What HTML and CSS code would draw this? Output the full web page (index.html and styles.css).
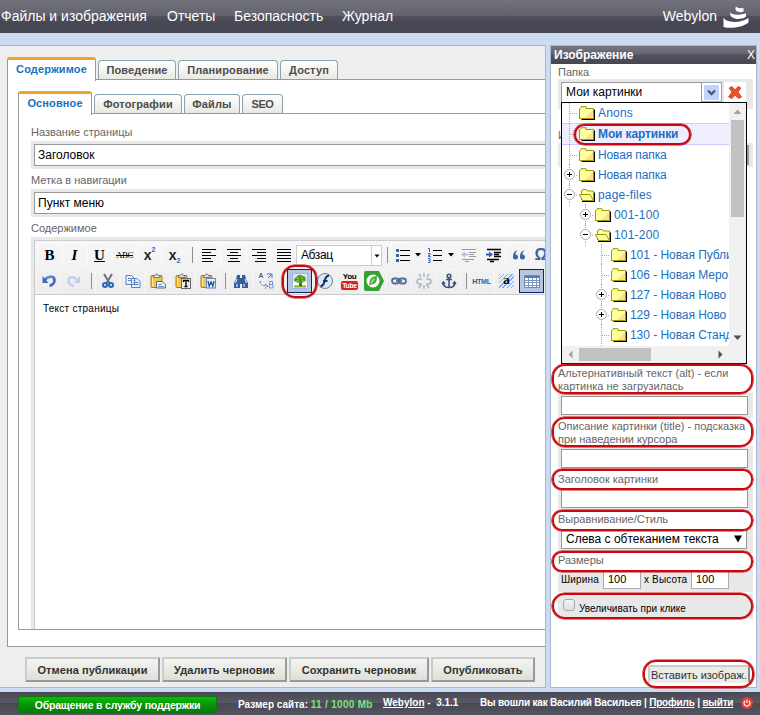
FILE: index.html
```html
<!DOCTYPE html>
<html lang="ru">
<head>
<meta charset="utf-8">
<title>Webylon</title>
<link rel="stylesheet" href="styles.css">
</head>
<body>
<svg class="defs" width="0" height="0">
  <symbol id="folder" viewBox="0 0 16 14"><path d="M2.500 13.500h13v-10" fill="none" stroke="#000" stroke-width="1.500"/><path d="M.5 12.500V3l1.500-1.500V.7h5V2.500h7.500v10z" fill="#ffffa0" stroke="#9c9a00"/><path d="M6 12l8-8v8z" fill="#f5cf7a" opacity=".6"/></symbol>
  <symbol id="open" viewBox="0 0 16 14"><path d="M3 13.500h12.500v-9" fill="none" stroke="#000" stroke-width="1.500"/><path d="M2.500 11V3l1-1.500h4l1 1.500h6v9h-11z" fill="#ffffa0" stroke="#9c9a00"/><path d="M.5 6.500h10.500l3.500 6h-11z" fill="#ffffa0" stroke="#9c9a00"/></symbol>
  <symbol id="plus" viewBox="0 0 11 11"><circle cx="5.500" cy="5.500" r="5" fill="#fff" stroke="#aaa"/><path d="M3 5.500h5M5.500 3v5" stroke="#000"/></symbol>
  <symbol id="minus" viewBox="0 0 11 11"><circle cx="5.500" cy="5.500" r="5" fill="#fff" stroke="#aaa"/><path d="M3 5.500h5" stroke="#000"/></symbol>
  <symbol id="clip" viewBox="0 0 16 16"><rect x="1" y="2.500" width="11" height="12" rx="1" fill="#f1c84b" stroke="#a5781c"/><path d="M3.500 4.500V2.500H5l1-1.500h1.500l1 1.500H10v2z" fill="#ddd" stroke="#666" stroke-width=".8"/><path d="M2.500 5v8" stroke="#ffed9e"/></symbol>
</svg>
<header class="top">
  <nav><a class="n1">Файлы и изображения</a><a class="n2">Отчеты</a><a class="n3">Безопасность</a><a class="n4">Журнал</a></nav>
  <div class="brand"><span>Webylon</span>
    <svg width="26" height="22" viewBox="0 0 26 22" fill="#fff"><path d="M13 0c0 1.800 3 2.600 7.500 2v3.500C17 7 12 6 12.500 2z"/><path d="M7 6c1 3 9 3.600 16 1.200v3.600C17 14.500 6.500 14 7 6z"/><path d="M.5 11.500C3 17 17 17.500 25.500 12v4.500C20 21.500 7 23 .5 21z"/></svg>
  </div>
</header>
<div class="work">
<main class="left">
  <div class="tabs outer"><a class="tab on t1"><span>Содержимое</span></a><a class="tab t2"><span>Поведение</span></a><a class="tab t3"><span>Планирование</span></a><a class="tab t4"><span>Доступ</span></a></div>
  <section class="sheet">
    <div class="tabs inner"><a class="tab on u1"><span>Основное</span></a><a class="tab u2"><span>Фотографии</span></a><a class="tab u3"><span>Файлы</span></a><a class="tab u4"><span>SEO</span></a></div>
    <div class="form">
      <label class="l1">Название страницы</label>
      <div class="wrap"><div class="input">Заголовок</div></div>
      <label class="l2">Метка в навигации</label>
      <div class="wrap"><div class="input">Пункт меню</div></div>
      <label class="l3">Содержимое</label>
      <div class="edwrap"><div class="editor">
        <div class="toolbar">
          <div class="row">
            <b class="btn serif">B</b><i class="btn serif">I</i><u class="btn serif">U</u><s class="btn abc">ABC</s><span class="btn xx">x<sup>2</sup></span><span class="btn xx">x<sub>2</sub></span><span class="sep"></span>
            <span class="btn"><svg width="16" height="16"><path d="M1 2.500h14M1 5.500h9M1 8.500h14M1 11.500h9M1 14.500h11" stroke="#000"/></svg></span>
            <span class="btn"><svg width="16" height="16"><path d="M1 2.500h14M4 5.500h8M1 8.500h14M4 11.500h8M2 14.500h12" stroke="#000"/></svg></span>
            <span class="btn"><svg width="16" height="16"><path d="M1 2.500h14M6 5.500h9M1 8.500h14M6 11.500h9M4 14.500h11" stroke="#000"/></svg></span>
            <span class="btn"><svg width="16" height="16"><path d="M1 2.500h14M1 5.500h14M1 8.500h14M1 11.500h14M1 14.500h14" stroke="#000"/></svg></span>
            <span class="fmt"><em>Абзац</em><svg width="10" height="20"><path d="M2.500 8.500h5l-2.500 3z"/></svg></span><span class="sep s2"></span>
            <span class="btn ul"><svg width="16" height="16"><path d="M5 3.500h10M5 8.500h10M5 13.500h10" stroke="#000"/><path d="M1 2h3v3H1zM1 7h3v3H1zM1 12h3v3H1z" fill="#3c62a8"/></svg></span><span class="arr"><svg width="6" height="4"><path d="M0 0h6L3 3.500z"/></svg></span>
            <span class="btn ul"><svg width="16" height="16"><path d="M6 3.500h9M6 8.500h9M6 13.500h9" stroke="#000"/><path d="M1 1.500h1.500V5M1 6.500h2v1.700H1.500v1.500H4M1 11.500h2v4H1M1.500 13.500H3" fill="none" stroke="#3564b8"/></svg></span><span class="arr a2"><svg width="6" height="4"><path d="M0 0h6L3 3.500z"/></svg></span>
            <span class="btn faded"><svg width="16" height="16"><path d="M1 2.500h14M8 5.500h7M8 7.500h5M8 9.500h7M1 12.500h12M4 14.500h4" stroke="#222"/><path d="M0 7.500l4-3v2h3v2H4v2z" fill="#4e87df"/></svg></span>
            <span class="btn"><svg width="16" height="16"><path d="M1 2.500h14M8 5.500h7M8 7.500h5M8 9.500h7M1 12.500h12M4 14.500h4" stroke="#000" stroke-width="1.300"/><path d="M7 7.500l-4-3v2H0v2h3v2z" fill="#2c5fc2"/></svg></span>
            <span class="btn"><svg width="16" height="16" fill="#3864a8"><path d="M7 3C3 4 2 7 2 10a2.500 2.500 0 1 0 2.500-2.500C4.500 5.500 5.500 4 7 3zM14 3c-4 1-5 4-5 7a2.500 2.500 0 1 0 2.500-2.500C11.500 5.500 12.500 4 14 3z"/></svg></span>
            <span class="btn om">Ω</span>
          </div>
          <div class="row">
            <span class="btn"><svg width="16" height="16"><path d="M4 7c2-3.500 9-5 9.500 0 .2 3-2 5-5 6" fill="none" stroke="#426bbf" stroke-width="2.600"/><path d="M1.500 3v7h6z" fill="#426bbf"/><path d="M5 6c2-2.500 6-3 7-.5" fill="none" stroke="#94b6f1"/></svg></span>
            <span class="btn faded"><svg width="16" height="16"><path d="M11 7C9 3.500 3 3 2.500 7c-.2 3 2 5 5 6" fill="none" stroke="#80a6ea" stroke-width="2.400"/><path d="M14 3v7H8z" fill="#80a6ea"/></svg></span><span class="sep"></span>
            <span class="btn"><svg width="16" height="16"><path d="M4 1l5.500 9M12 1L6.500 10" stroke="#667284" stroke-width="2"/><g fill="none" stroke="#2c66b7" stroke-width="2"><circle cx="5" cy="12" r="2"/><circle cx="11" cy="12" r="2"/></g></svg></span>
            <span class="btn"><svg width="16" height="16" fill="#e9f1ff" stroke="#5b83cc"><path d="M1 2.500h5.500l3 3v6H1zM6.500 5.500H12l3 3v6H6.500z"/><path d="M3 5.500h3M3 7.500h3M8.500 9.500h5M8.500 11.500h5M8.500 7.500h2"/></svg></span>
            <span class="btn"><svg width="16" height="16"><use href="#clip"/><path d="M6.500 8.500H12l3.500 3v3.500h-9z" fill="#eef3fb" stroke="#536a92"/><path d="M8 11.500h4M8 13.500h6" stroke="#7692bd"/></svg></span>
            <span class="btn"><svg width="16" height="16"><use href="#clip"/><rect x="6.500" y="5.500" width="9" height="10" fill="#eee" stroke="#666"/><path d="M8.500 9V7.500h5V9M11 7.500v6M9.500 13.500h3" fill="none" stroke="#000" stroke-width="1.300"/></svg></span>
            <span class="btn"><svg width="16" height="16"><use href="#clip"/><rect x="6.500" y="5.500" width="9" height="9.500" fill="#eaf2ff" stroke="#6185bf"/><path d="M8 8l1.200 5L11 9l1.800 4L14 8" fill="none" stroke="#1b57ac" stroke-width="1.400"/></svg></span><span class="sep s3"></span>
            <span class="btn"><svg width="16" height="16"><path d="M4 2h3v3h2V2h3l1 4 2 4v5H9v-4H7v4H1v-5l2-4z" fill="#365e9f"/><path d="M4 6L2.500 10M12 6l1.500 4M4 11v3M11 11v3" stroke="#bfd4f4" stroke-width="1.300"/></svg></span>
            <span class="btn"><svg width="18" height="18" fill="none"><path d="M2 6l2-5 2 5M3 4.500h2" stroke="#4d628b"/><path d="M10 2h5v4M14 3l-3 3" stroke="#3667da"/><path d="M3 9c0 3 2 5 7 5M8 12l3 2-3 2.500" stroke="#3667da" stroke-dasharray="2 1"/><path d="M12.500 9.500h3v3h-3zM12.500 12.500h3.500v3.500h-3.500z" stroke="#7096e3"/></svg></span><span class="sep s4"></span>
            <span class="btn pressed"><svg width="16" height="16"><path fill="#fff" stroke="#98b9e3" d="M.5.500h15v15H.5z"/><path fill="#d4e8fb" d="M1 1h14v8H1z"/><path d="M2 12.500h12v2H2z" fill="#73b52d"/><path d="M7.500 7h2l.5 6H7z" fill="#71440d"/><path d="M3 8.500c-2-2 0-4 1.500-4 .5-3 5-3 6-1.500 3 0 4 3 2.500 5-2 2.500-8 2.500-10 .5z" fill="#4c9b19"/><path d="M5 5l2 1M9 4l2 2M4 8h3M10 8h2" stroke="#9bd44b"/></svg><i class="ring rimg"></i></span>
            <span class="btn"><svg width="16" height="16"><circle cx="8" cy="8" r="7.500" fill="#dbe7f6" stroke="#6f83a3"/><path d="M12 2.500C8 3 8 7 7.200 9.500 6.500 12 5.500 13 3.500 13.500M6 8h4.500" stroke="#17335f" stroke-width="2" fill="none"/></svg></span>
            <span class="btn yt"><span>You</span><em>Tube</em></span>
            <span class="btn b24"><svg class="green" width="20" height="20"><path d="M2 0h13l5 10-5 10H2q-2 0-2-2V2q0-2 2-2z" fill="#36a133"/><circle cx="9" cy="10" r="6.500" fill="#fff"/><path d="M13 5c-5 0-8 3-7.500 8L5 15l2-1.500c5 0 6-3.500 6-8.500z" fill="#4dab42"/><path d="M10 8l-3 4" stroke="#fff"/></svg></span>
            <span class="btn"><svg width="16" height="16" fill="none" stroke="#546d96" stroke-width="1.800"><rect x="1" y="5.500" width="7" height="5" rx="2.500"/><rect x="8" y="5.500" width="7" height="5" rx="2.500"/><path d="M5 8h6"/></svg></span>
            <span class="btn faded"><svg width="16" height="16" fill="none" stroke="#546d96" stroke-width="1.500"><path d="M6 6H3.500a2 2 0 0 0 0 5H6M10 6h2.500a2 2 0 0 1 0 5H10M8 0v4M3 1l2 3M13 1l-2 3M8 12v4M5 12l-2 3M11 12l2 3"/></svg></span>
            <span class="btn"><svg width="16" height="16" fill="none" stroke="#3b557f" stroke-width="1.600"><circle cx="8" cy="3" r="1.800"/><path d="M8 5v9M5 6.500h6M2 9c0 4 3 5.500 6 5.500S14 13 14 9M1 11l1.500-2L4 11M12 11l1.500-2 1.500 2"/></svg></span><span class="sep s3"></span>
            <span class="btn html"><em>HT</em>ML</span>
            <span class="btn"><span class="aa">a</span></span>
            <span class="btn pressed"><svg width="16" height="16"><path d="M.5 2.500h15v12H.5z" fill="#fff" stroke="#7486a6"/><path d="M1 3h14v2H1z" fill="#5d78aa"/><path d="M1 7.500h14M1 9.500h14M1 12.500h14M4.500 5v9M8.500 5v9M12.500 5v9" stroke="#7b95c0"/></svg></span>
          </div>
        </div>
        <div class="page">Текст страницы</div>
      </div></div>
    </div>
  </section>
  <div class="actions"><a class="b1"><span>Отмена публикации</span></a><a class="b2"><span>Удалить черновик</span></a><a class="b3"><span>Сохранить черновик</span></a><a class="b4"><span>Опубликовать</span></a></div>
</main>
<aside class="right">
  <h2><span>Изображение</span><em>X</em></h2>
  <div class="lab papka">Папка</div>
  <div class="gray pick">
    <div class="combo"><span>Мои картинки</span></div><div class="drop"><svg width="15" height="15"><rect width="15" height="15" rx="1.500" fill="#bfd3fb"/><path d="M4 5.500L7.500 9 11 5.500" fill="none" stroke="#49597d" stroke-width="2.300"/></svg></div>
    <div class="del"><svg width="14" height="13"><path d="M1 2l3-1.500L7 4l3-3.500L13 2 10 6l3.500 5-3 1.500L7 9l-3 3.500L.5 11 4 6z" fill="#ef5124" stroke="#b93013" stroke-width=".7"/></svg></div>
    <div class="tree">
      <div class="nodes">
        <div class="node lat"><i class="ln"></i><svg class="f"><use href="#folder"/></svg><span>Anons</span></div>
        <div class="node sel"><i class="ln"></i><svg class="f"><use href="#folder"/></svg><span>Мои картинки</span><i class="ring rsel"></i></div>
        <div class="node"><i class="ln"></i><svg class="f"><use href="#folder"/></svg><span>Новая папка</span></div>
        <div class="node"><i class="ln"></i><svg class="pm"><use href="#plus"/></svg><svg class="f"><use href="#folder"/></svg><span>Новая папка</span></div>
        <div class="node lat"><i class="ln"></i><svg class="pm"><use href="#minus"/></svg><svg class="f"><use href="#open"/></svg><span>page-files</span></div>
        <div class="node lat d1"><i class="ln"></i><svg class="pm"><use href="#plus"/></svg><svg class="f"><use href="#folder"/></svg><span>001-100</span></div>
        <div class="node lat d1"><i class="ln"></i><svg class="pm"><use href="#minus"/></svg><svg class="f"><use href="#open"/></svg><span>101-200</span></div>
        <div class="node d2"><i class="ln"></i><svg class="f"><use href="#folder"/></svg><span>101 - Новая Публи</span></div>
        <div class="node d2"><i class="ln"></i><svg class="f"><use href="#folder"/></svg><span>106 - Новая Меро</span></div>
        <div class="node d2"><i class="ln"></i><svg class="pm"><use href="#plus"/></svg><svg class="f"><use href="#folder"/></svg><span>127 - Новая Ново</span></div>
        <div class="node d2"><i class="ln"></i><svg class="pm"><use href="#plus"/></svg><svg class="f"><use href="#folder"/></svg><span>129 - Новая Ново</span></div>
        <div class="node d2"><i class="ln"></i><svg class="f"><use href="#folder"/></svg><span>130 - Новая Станд</span></div>
      </div>
      <div class="vs"><svg width="17" height="17"><path d="M4.500 11h8l-4-4.500z" fill="#a3a3a3"/></svg><i></i><svg width="17" height="17"><path d="M4.500 6.500h8l-4 4.500z" fill="#505050"/></svg></div>
      <div class="hs"><svg width="17" height="17"><path d="M10.500 4.500v8l-4-4z" fill="#a3a3a3"/></svg><i></i><svg width="17" height="17"><path d="M6.500 4.500v8l4-4z" fill="#505050"/></svg></div>
      <div class="corner"></div>
    </div>
  </div>
  <div class="lab img">И</div>
  <div class="gray hid"><div></div></div>
  <div class="lab two alt"><span class="k1">Альтернативный текст (alt) - если</span><br><span class="k2">картинка не загрузилась</span><i class="ring"></i></div>
  <div class="gray g1"><div class="box"></div></div>
  <div class="lab two"><span class="k3">Описание картинки (title) - подсказка</span><br><span class="k4">при наведении курсора</span><i class="ring"></i></div>
  <div class="gray g1"><div class="box"></div></div>
  <div class="lab one k5">Заголовок картинки<i class="ring"></i></div>
  <div class="gray g2"><div class="box"></div></div>
  <div class="lab one z k6">Выравнивание/Стиль<i class="ring"></i></div>
  <div class="gray g3"><div class="select"><span>Слева с обтеканием текста</span><svg width="8" height="8"><path d="M0 .5h8L4 7.500z"/></svg></div></div>
  <div class="lab one y k7">Размеры<i class="ring"></i></div>
  <div class="gray size"><span class="w">Ширина</span><div>100</div><span class="h">x Высота</span><div>100</div></div>
  <div class="gray chk"><b></b><span>Увеличивать при клике</span><i class="ring"></i></div>
  <div class="ins"><a><span>Вставить изображ.</span></a><i class="ring"></i></div>
</aside>
</div>
<footer>
  <a class="help"><span>Обращение в службу поддержки</span></a>
  <span class="sz">Размер сайта: <em>11 / 1000 Mb</em></span>
  <span class="ver"><u>Webylon</u> -&nbsp; 3.1.1</span>
  <span class="who">Вы вошли как <b>Василий Васильев</b> | <u>Профиль</u> | <u>выйти</u></span>
  <svg width="12" height="12"><circle cx="6" cy="6" r="6" fill="#e23c32"/><path d="M4 3.800a3 3 0 1 0 4 0M6 2.500v3.500" fill="none" stroke="#fff" stroke-width="1.200"/></svg>
</footer>
</body>
</html>
```

FILE: styles.css
```css
* { box-sizing: border-box; }
body { margin: 0; width: 760px; height: 715px; overflow: hidden; background: #cbdcf2; font: 11px "Liberation Sans", Arial, sans-serif; color: #222; white-space: nowrap; }
em { font-style: normal; }
svg { display: block; flex: none; }
.defs { position: absolute; }

.top { height: 33px; display: flex; justify-content: space-between; background: linear-gradient(#73737e 0, #62626d 16px, #50515d 16px, #464753 24px, #464753 100%); color: #fff; font-size: 14px; line-height: 33px; }
nav { display: flex; }
nav a { margin-left: 1px; }
.n1 { width: 146px; }
.n2 { width: 47px; margin-left: 20px; }
.n3 { width: 88px; margin-left: 20px; }
.n4 { margin-left: 20px; }
.brand { display: flex; margin-right: 11px; gap: 6px; }
.brand svg { margin-top: 6px; }

.work { display: flex; height: 659px; padding-top: 12px; }
.left { width: 546px; height: 643px; background: #eee; border: solid #a9b8c9; border-width: 1px 1px 1px 0; padding: 11px 0 0 7px; overflow: hidden; }
.tabs { display: flex; align-items: flex-end; height: 23px; gap: 2px; position: relative; font-weight: bold; }
.tab { height: 20px; border: 1px solid #8da3b0; border-bottom-color: #999; border-radius: 4px 4px 0 0; background: linear-gradient(#fff, #e9e9e2); color: #4d4d4d; text-align: center; line-height: 19px; letter-spacing: .12px; }
.tab.on { height: 24px; margin-bottom: -1px; border: solid #999; border-width: 3px 1px 0; border-top-color: #f5a31f; background: #fff; color: #1572c3; line-height: 19px; z-index: 1; border-radius: 3px 3px 0 0; }
.t1 { width: 89px; } .t2 { width: 78px; } .t3 { width: 100px; } .t4 { width: 58px; }
.u1 { width: 74px; } .u2 { width: 88px; } .u3 { width: 56px; } .u4 { width: 41px; }
.tab.u4 { letter-spacing: -.4px; }
.sheet { height: 568px; margin-top: -1px; background: #fff; border: 1px solid #999; border-right: 0; padding: 11px 0 0 10px; }
.form { height: 517px; margin-top: -1px; border: 1px solid #999; border-right: 0; padding-left: 12px; overflow: hidden; }
.form label { display: block; height: 20px; line-height: 13px; padding-top: 5px; color: #666; }
.form label.l1 { height: 27px; padding-top: 12px; }
.wrap { height: 28px; background: #e8e8e8; padding: 3px 0 3px 3px; }
.input { height: 22px; border: 1px solid #999; border-right: 0; background: #fff; padding-left: 3px; font-size: 12px; line-height: 20px; color: #000; }
.edwrap { background: #e8e8e8; padding: 3px 0 0 3px; height: 420px; }
.editor { height: 420px; background: #fff; border: 1px solid #ccc; border-right: 0; }
.toolbar { height: 54px; background: linear-gradient(#f7f7f7, #ececec); border-bottom: 1px solid #ccc; padding: 1px 0 0 2px; }
.row { display: flex; height: 26px; align-items: center; }
.row + .row { margin-left: -1px; }
.btn { width: 25px; height: 24px; flex: none; display: flex; align-items: center; justify-content: center; position: relative; color: #000; border: 1px solid rgba(255,255,255,.35); }
.b24 { width: 24px; }
.serif { font: bold 15px "Liberation Serif", serif; }
i.serif { font-style: italic; }
u.serif { text-decoration: underline; }
.abc { font: 9px "Liberation Serif", serif; letter-spacing: -.5px; text-decoration: line-through; }
.xx { font: bold 14px "Liberation Sans", sans-serif; color: #222; }
.xx sup, .xx sub { font-size: 7px; color: #2c66c7; align-self: flex-start; margin-top: 2px; }
.xx sub { align-self: flex-end; margin-bottom: 2px; }
.sep { flex: none; width: 9px; height: 16px; background: linear-gradient(#8b8f99, #8b8f99) 5px 0 / 1px 100% no-repeat; }
.s3 { width: 8px; }
.fmt { width: 86px; height: 21px; flex: none; display: flex; justify-content: space-between; background: #fff; border: 1px solid #ccc; color: #000; font-size: 12px; line-height: 18px; letter-spacing: -.4px; }
.fmt em { padding-left: 4px; }
.fmt svg { border-left: 1px solid #ccc; height: 19px; }
.ul { width: 23px; }
.arr { width: 9px; padding-left: 1px; flex: none; }
.a2 { width: 10px; padding-left: 2px; }
.faded { opacity: .42; }
.om { color: #3864a8; font-size: 16px; font-weight: bold; width: 20px; }
.pressed { border: 1px solid #0a246a; background: #b9c5df; }
.yt { flex-direction: column; font: bold 8px/8px "Liberation Sans", sans-serif; letter-spacing: -.4px; }
.yt em { background: #de1d23; color: #fff; font-size: 7px; border-radius: 2px; padding: 0 1px; height: 9px; line-height: 9px; }
.green { margin: 0 -2px; }
.html { font-size: 7px; font-weight: bold; color: #2a62c6; letter-spacing: -.2px; }
.html em { color: #375789; }
.aa { width: 15px; height: 14px; font: bold 13px/12px "Liberation Serif", serif; text-align: center; background: repeating-linear-gradient(135deg, #81a8ec 0 1px, #e4eefd 1px 3px); }
.page { padding: 8px 8px; font: 10px/12px "Liberation Sans", sans-serif; color: #000; letter-spacing: .25px; }
.actions { display: flex; gap: 2px; padding: 10px 0 0 18px; font-weight: bold; }
.actions a { height: 25px; border: 2px solid; border-color: #ccc #999 #999 #ccc; background: linear-gradient(#f3f3f0, #dfdfda); text-align: center; line-height: 22px; color: #333; letter-spacing: .06px; }
.b1 { width: 135px; } .b2 { width: 125px; } .b3 { width: 140px; } .b4 { width: 104px; }

.right { position: relative; margin-left: 4px; width: 207px; height: 643px; background: #fff; border: 1px solid #a9b8c9; }
h2 { margin: 0; height: 18px; display: flex; justify-content: space-between; background: linear-gradient(#767681, #646570 8px, #50515d 9px, #464753); color: #fff; font-size: 12px; line-height: 19px; padding: 0 1px 0 3px; }
h2 em { font-weight: normal; }
.lab { padding-left: 7px; color: #666; line-height: 13px; position: relative; }
.papka { height: 15px; padding-top: 2px; }
.gray { margin: 0 3px 0 7px; background: #e8e8e8; position: relative; }
.pick { height: 30px; display: flex; padding: 3px 0 0 3px; z-index: 3; }
.combo { width: 141px; height: 21px; background: #fff; border: 1px solid #999; padding-left: 4px; font-size: 12px; line-height: 19px; color: #000; }
.drop { width: 20px; height: 20px; background: #fff; border: 1px solid #8aa8c4; border-left: 0; padding: 2px; margin-right: 2px; }
.del { width: 22px; height: 20px; background: #fff; padding: 4px; }
.tree { position: absolute; left: 3px; top: 23px; width: 186px; height: 262px; background: #fff; border: 1px solid #000; display: grid; grid-template: 243px 17px / 167px 17px; }
.nodes { overflow: hidden; position: relative; font-size: 12px; color: #1b6fbf; }
.node { height: 20px; display: flex; align-items: center; padding-left: 17px; position: relative; letter-spacing: -.12px; }
.node .f { width: 16px; height: 14px; margin-right: 3px; }
.lat { letter-spacing: .2px; }
.sel { height: 22px; background: #eef; border: solid #ccf; border-width: 1px 0; font-weight: bold; }
.d1 { padding-left: 33px; }
.d2 { padding-left: 49px; letter-spacing: -.05px; }
.ln { position: absolute; left: 7px; top: -1px; bottom: -1px; width: 8px; border-left: 1px dotted #aaa; background: repeating-linear-gradient(90deg, #aaa 0 1px, #fff0 1px 2px) 0 50% / 100% 1px no-repeat; }
.d1 .ln { left: 23px; }
.d2 .ln { left: 39px; }
.pm { position: absolute; left: 2px; top: 4px; width: 11px; height: 11px; }
.d1 .pm { left: 18px; }
.d2 .pm { left: 34px; }
.vs, .hs, .corner { background: #f1f1f1; }
.vs { display: flex; flex-direction: column; }
.vs i { width: 13px; height: 97px; margin: 0 2px auto; background: #c1c1c1; }
.hs { display: flex; }
.hs i { height: 13px; width: 72px; margin: 2px auto 0 0; background: #c1c1c1; }
.img { height: 34px; padding-top: 20px; }
.hid { height: 24px; padding: 2px 4px; }
.hid div { height: 20px; border-right: 2px solid #999; }
.two { height: 28px; padding-top: 2px; }
.alt { margin-top: 198px; }
.g1 { height: 25px; padding: 3px 5px 0 3px; }
.box { height: 19px; border: 1px solid #999; background: #fff; }
.one { height: 18px; padding-top: 2px; }
.g2 { height: 23px; padding: 0 5px 0 3px; }
.z { height: 17px; padding-top: 1px; }
.g3 { height: 24px; padding: 0 6px 0 3px; }
.select { height: 20px; border: 1px solid #999; border-top: 0; background: #fff; font-size: 12px; line-height: 20px; padding: 0 4px; display: flex; justify-content: space-between; align-items: center; color: #000; }
.y { height: 17px; padding-top: 1px; }
.size { height: 22px; display: flex; padding-left: 3px; color: #000; font-size: 10px; line-height: 19px; }
.size span { letter-spacing: .15px; }
.size div { width: 38px; height: 19px; border: 1px solid #aaa; background: #fff; padding-left: 4px; font-size: 11px; line-height: 17px; }
.w { width: 42px; } .h { width: 50px; padding-left: 3px; }
.chk { margin-top: 2px; height: 25px; color: #000; font-size: 10px; padding: 5px 0 0 5px; display: flex; }
.chk b { width: 12px; height: 12px; border: 1px solid #aaa; border-radius: 3px; background: linear-gradient(#f4f4f4, #ddd); margin-right: 4px; }
.chk span { padding-top: 4px; }
.ins { position: absolute; left: 97px; top: 619px; width: 102px; height: 18px; }
.ins a { display: block; height: 18px; border: 2px solid; border-color: #ccc #888 #eee #ccc; background: #ebebe8; line-height: 16px; color: #333; padding-left: 1px; }
.ring { position: absolute; border: 2px solid #c70a0f; border-radius: 13px; z-index: 4; box-shadow: 0 0 0 .6px #c70a0f; }
.lab .ring { left: 1px; width: 201px; top: -1px; height: 30px; }
.one .ring { top: -2px; height: 21px; border-radius: 10px; }
.chk .ring { left: -6px; width: 201px; top: -1px; height: 26px; }
.ins .ring { left: -5px; top: -5px; width: 111px; height: 28px; }
.rimg { left: -6px; top: -5px; width: 35px; height: 33px; }
.rsel { left: 12px; top: 0; width: 117px; height: 21px; }

footer { height: 23px; background: linear-gradient(#474854 0, #5a5b66 50%, #484955 50%, #535460 100%); display: flex; color: #fff; font-weight: bold; font-size: 10px; line-height: 22px; }
.help { margin: 4px 0 0 18px; width: 199px; height: 17px; border: 1px solid #107710; border-radius: 2px; background: linear-gradient(#08bd08, #089508 50%, #087b08); font-size: 10.5px; letter-spacing: -.18px; line-height: 17px; text-align: center; }
.sz { padding: 2px 0 0 21px; width: 166px; }
.sz em { color: #7be57b; letter-spacing: .3px; }
.ver { width: 97px; }
.who { width: 261px; letter-spacing: -.2px; }
footer svg { margin-top: 5px; }
```
